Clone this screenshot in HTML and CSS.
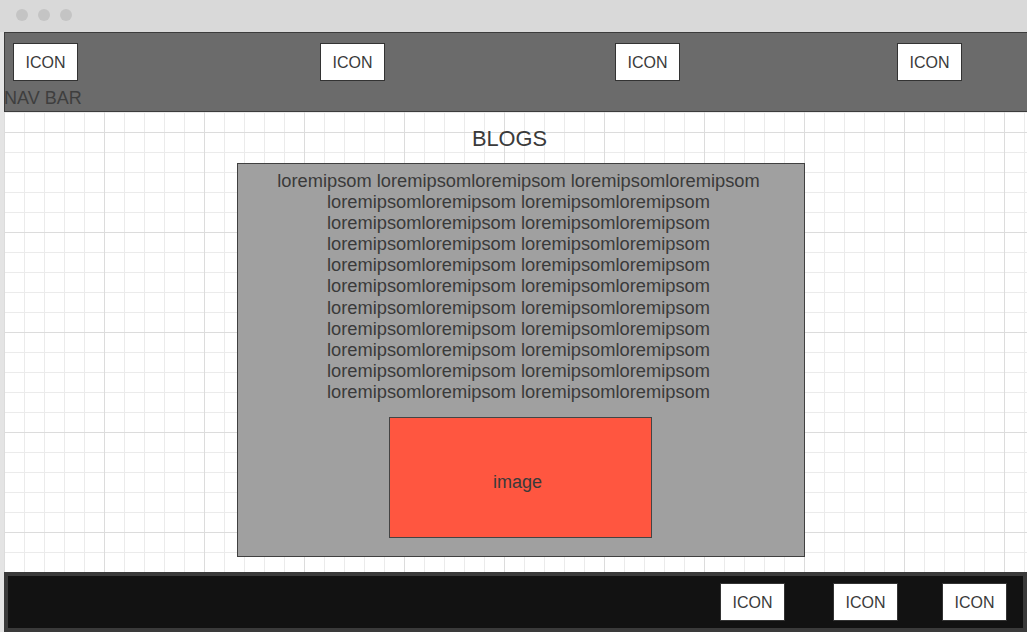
FILE: index.html
```html
<!DOCTYPE html>
<html>
<head>
<meta charset="utf-8">
<link rel="stylesheet" href="styles.css">
</head>
<body>
<div class="chrome">
  <span class="dot"></span><span class="dot"></span><span class="dot"></span>
</div>
<div class="page">
  <header class="nav">
    <div class="nav-icons">
      <div class="icon i1">ICON</div>
      <div class="icon i2">ICON</div>
      <div class="icon i3">ICON</div>
      <div class="icon i4">ICON</div>
    </div>
    <div class="nav-label">NAV BAR</div>
  </header>
  <main class="main">
    <h1 class="title">BLOGS</h1>
    <section class="card">
      <p class="lorem">loremipsom loremipsomloremipsom loremipsomloremipsom<br>loremipsomloremipsom loremipsomloremipsom<br>loremipsomloremipsom loremipsomloremipsom<br>loremipsomloremipsom loremipsomloremipsom<br>loremipsomloremipsom loremipsomloremipsom<br>loremipsomloremipsom loremipsomloremipsom<br>loremipsomloremipsom loremipsomloremipsom<br>loremipsomloremipsom loremipsomloremipsom<br>loremipsomloremipsom loremipsomloremipsom<br>loremipsomloremipsom loremipsomloremipsom<br>loremipsomloremipsom loremipsomloremipsom</p>
      <div class="image">image</div>
    </section>
  </main>
  <footer class="footer">
    <div class="icon">ICON</div>
    <div class="icon f2">ICON</div>
    <div class="icon f3">ICON</div>
  </footer>
</div>
</body>
</html>
```

FILE: styles.css
```css
* { box-sizing: border-box; }
html, body { margin: 0; padding: 0; }
body {
  width: 1027px;
  height: 632px;
  overflow: hidden;
  background: #e4e4e4;
  font-family: "Liberation Sans", Arial, sans-serif;
  color: #3a3a3a;
}
.chrome {
  height: 32px;
  background: #d9d9d9;
  display: flex;
  align-items: center;
  gap: 10px;
  padding: 0 0 2px 16px;
}
.dot {
  width: 12px;
  height: 12px;
  border-radius: 50%;
  background: #c4c4c4;
}
.page {
  margin-left: 4px;
  height: 600px;
  display: flex;
  flex-direction: column;
  background-color: #fff;
  background-image:
    linear-gradient(to right, #dcdcdc 1px, transparent 1px),
    linear-gradient(to bottom, #dcdcdc 1px, transparent 1px),
    linear-gradient(to right, #ebebeb 1px, transparent 1px),
    linear-gradient(to bottom, #ebebeb 1px, transparent 1px);
  background-size: 100px 100px, 100px 100px, 20px 20px, 20px 20px;
}
.nav {
  height: 80px;
  background: #6b6b6b;
  border-top: 1px solid #3c3c3c;
  border-bottom: 1px solid #3c3c3c;
  border-left: 1px solid #3c3c3c;
  padding-top: 10px;
}
.nav-icons {
  display: flex;
  padding-left: 8px;
}
.icon {
  width: 65px;
  height: 38px;
  background: #fff;
  border: 1px solid #333;
  font-size: 16px;
  display: flex;
  align-items: center;
  justify-content: center;
  padding-top: 2px;
  color: #3a3a3a;
  flex: none;
}
.i2 { margin-left: 242px; }
.i3 { margin-left: 230px; }
.i4 { margin-left: 217px; }
.nav-label {
  margin-top: 7px;
  margin-left: -1px;
  font-size: 18px;
  line-height: 21px;
  color: #3e3e3e;
}
.main {
  flex: 1;
  display: flex;
  flex-direction: column;
  align-items: center;
}
.title {
  margin: 15px 0 0 -12px;
  font-size: 21.8px;
  line-height: 24px;
  font-weight: normal;
  color: #3a3a3a;
}
.card {
  margin: 12px 0 0 10px;
  width: 568px;
  height: 394px;
  background: #a0a0a0;
  border: 1px solid #404040;
  display: flex;
  flex-direction: column;
  align-items: center;
  padding-top: 6px;
}
.lorem {
  margin: 0 4px 0 0;
  font-size: 18.3px;
  line-height: 21.1px;
  text-align: center;
  color: #3a3a3a;
}
.image {
  margin-top: 15px;
  margin-left: -1px;
  width: 263px;
  height: 121px;
  background: #ff5640;
  border: 1px solid #444;
  display: flex;
  align-items: center;
  justify-content: center;
  font-size: 18px;
  color: #3a3a3a;
  padding: 9px 5px 0 0;
}
.footer {
  height: 60px;
  border: 4px solid #3a3a3a;
  background: #121212;
  display: flex;
  justify-content: flex-end;
  align-items: flex-start;
  padding: 7px 16px 0 0;
}
.f2 { margin-left: 48px; }
.f3 { margin-left: 44px; }
```
